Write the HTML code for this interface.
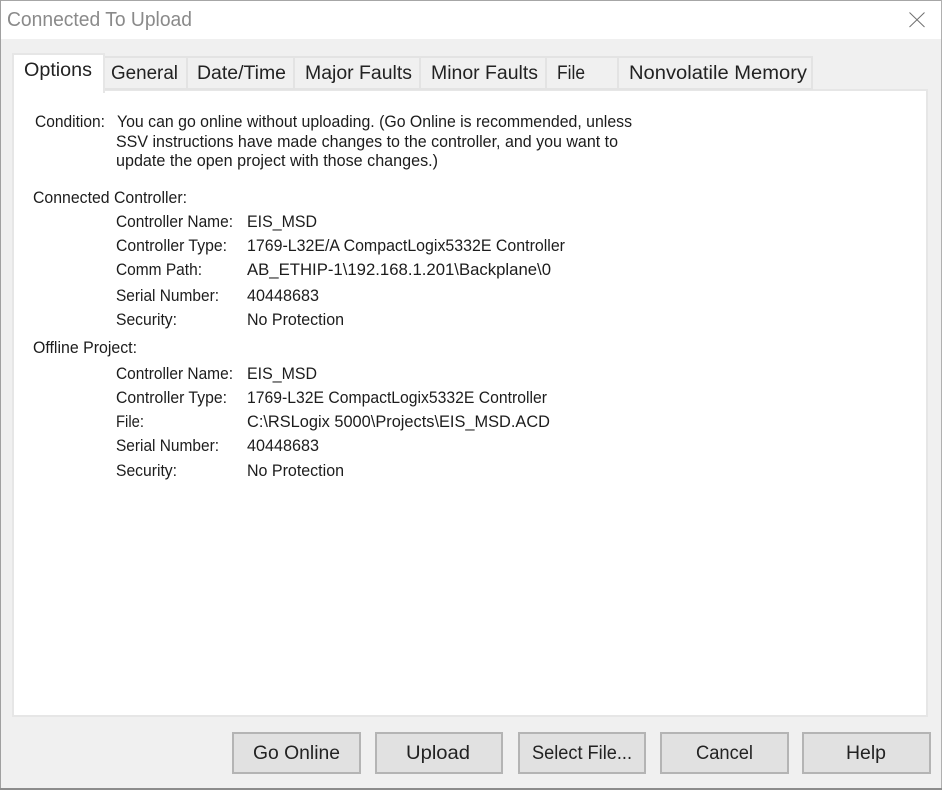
<!DOCTYPE html>
<html><head><meta charset="utf-8"><style>
html,body{margin:0;padding:0;background:#f0f0f0}
svg{display:block}
text{font-family:"Liberation Sans",sans-serif;fill:#1c1c1c}
.b{font-size:17px}
.t{font-size:19px;fill:#222}
</style></head><body>
<svg width="942" height="790" viewBox="0 0 942 790" xmlns="http://www.w3.org/2000/svg">
<rect width="942" height="790" fill="#f0f0f0"/>
<rect y="0" width="942" height="39" fill="#fff"/>
<rect width="942" height="1" fill="#a6a6a6"/>
<rect y="0" width="1" height="790" fill="#a0a0a0"/>
<rect x="941" width="1" height="790" fill="#b0b0b0"/>
<rect y="788" width="942" height="2" fill="#8c8c8c"/>
<text x="7" y="26" font-size="20" style="fill:#8a8a8a" textLength="185" lengthAdjust="spacingAndGlyphs">Connected To Upload</text>
<path d="M909.5 12.5L924.5 27M924.5 12.5L909.5 27" stroke="#707070" stroke-width="1" fill="none"/>

<!-- panel -->
<rect x="13" y="90" width="914" height="626" fill="#fff" stroke="#e6e6e6" stroke-width="2"/>

<!-- tabs -->
<g fill="#f0f0f0" stroke="#e3e3e3" stroke-width="2">
<rect x="104" y="57" width="83" height="32"/>
<rect x="187" y="57" width="107" height="32"/>
<rect x="294" y="57" width="126" height="32"/>
<rect x="420" y="57" width="126" height="32"/>
<rect x="546" y="57" width="72" height="32"/>
<rect x="618" y="57" width="194" height="32"/>
</g>
<rect x="13" y="54" width="91" height="38" fill="#fff" stroke="#e6e6e6" stroke-width="2"/>
<rect x="14" y="88" width="89" height="5" fill="#fff"/>
<text class="t" x="24" y="76" textLength="68" lengthAdjust="spacingAndGlyphs">Options</text>
<text class="t" x="111" y="79" textLength="67" lengthAdjust="spacingAndGlyphs">General</text>
<text class="t" x="197" y="79" textLength="89" lengthAdjust="spacingAndGlyphs">Date/Time</text>
<text class="t" x="305" y="79" textLength="107" lengthAdjust="spacingAndGlyphs">Major Faults</text>
<text class="t" x="431" y="79" textLength="107" lengthAdjust="spacingAndGlyphs">Minor Faults</text>
<text class="t" x="557" y="79" textLength="28" lengthAdjust="spacingAndGlyphs">File</text>
<text class="t" x="629" y="79" textLength="178" lengthAdjust="spacingAndGlyphs">Nonvolatile Memory</text>

<!-- body text -->
<g>
<text class="b" x="35" y="127" textLength="70" lengthAdjust="spacingAndGlyphs">Condition:</text>
<text class="b" x="117" y="127" textLength="515" lengthAdjust="spacingAndGlyphs">You can go online without uploading. (Go Online is recommended, unless</text>
<text class="b" x="116" y="147" textLength="502" lengthAdjust="spacingAndGlyphs">SSV instructions have made changes to the controller, and you want to</text>
<text class="b" x="116" y="166" textLength="322" lengthAdjust="spacingAndGlyphs">update the open project with those changes.)</text>

<text class="b" x="33" y="203" textLength="154" lengthAdjust="spacingAndGlyphs">Connected Controller:</text>
<text class="b" x="116" y="227" textLength="117" lengthAdjust="spacingAndGlyphs">Controller Name:</text>
<text class="b" x="247" y="227" textLength="70" lengthAdjust="spacingAndGlyphs">EIS_MSD</text>
<text class="b" x="116" y="251" textLength="111" lengthAdjust="spacingAndGlyphs">Controller Type:</text>
<text class="b" x="247" y="251" textLength="318" lengthAdjust="spacingAndGlyphs">1769-L32E/A CompactLogix5332E Controller</text>
<text class="b" x="116" y="275" textLength="86" lengthAdjust="spacingAndGlyphs">Comm Path:</text>
<text class="b" x="247" y="275" textLength="304" lengthAdjust="spacingAndGlyphs">AB_ETHIP-1\192.168.1.201\Backplane\0</text>
<text class="b" x="116" y="301" textLength="103" lengthAdjust="spacingAndGlyphs">Serial Number:</text>
<text class="b" x="247" y="301" textLength="72" lengthAdjust="spacingAndGlyphs">40448683</text>
<text class="b" x="116" y="325" textLength="61" lengthAdjust="spacingAndGlyphs">Security:</text>
<text class="b" x="247" y="325" textLength="97" lengthAdjust="spacingAndGlyphs">No Protection</text>

<text class="b" x="33" y="353" textLength="104" lengthAdjust="spacingAndGlyphs">Offline Project:</text>
<text class="b" x="116" y="379" textLength="117" lengthAdjust="spacingAndGlyphs">Controller Name:</text>
<text class="b" x="247" y="379" textLength="70" lengthAdjust="spacingAndGlyphs">EIS_MSD</text>
<text class="b" x="116" y="403" textLength="111" lengthAdjust="spacingAndGlyphs">Controller Type:</text>
<text class="b" x="247" y="403" textLength="300" lengthAdjust="spacingAndGlyphs">1769-L32E CompactLogix5332E Controller</text>
<text class="b" x="116" y="427" textLength="28" lengthAdjust="spacingAndGlyphs">File:</text>
<text class="b" x="247" y="427" textLength="303" lengthAdjust="spacingAndGlyphs">C:\RSLogix 5000\Projects\EIS_MSD.ACD</text>
<text class="b" x="116" y="451" textLength="103" lengthAdjust="spacingAndGlyphs">Serial Number:</text>
<text class="b" x="247" y="451" textLength="72" lengthAdjust="spacingAndGlyphs">40448683</text>
<text class="b" x="116" y="476" textLength="61" lengthAdjust="spacingAndGlyphs">Security:</text>
<text class="b" x="247" y="476" textLength="97" lengthAdjust="spacingAndGlyphs">No Protection</text>
</g>

<!-- buttons -->
<g fill="#e1e1e1" stroke="#b4b4b4" stroke-width="2">
<rect x="233" y="733" width="127" height="40"/>
<rect x="376" y="733" width="126" height="40"/>
<rect x="519" y="733" width="126" height="40"/>
<rect x="661" y="733" width="127" height="40"/>
<rect x="803" y="733" width="127" height="40"/>
</g>
<text class="t" x="253" y="759" textLength="87" lengthAdjust="spacingAndGlyphs">Go Online</text>
<text class="t" x="406" y="759" textLength="64" lengthAdjust="spacingAndGlyphs">Upload</text>
<text class="t" x="532" y="759" textLength="100" lengthAdjust="spacingAndGlyphs">Select File...</text>
<text class="t" x="696" y="759" textLength="57" lengthAdjust="spacingAndGlyphs">Cancel</text>
<text class="t" x="846" y="759" textLength="40" lengthAdjust="spacingAndGlyphs">Help</text>
</svg>
</body></html>
